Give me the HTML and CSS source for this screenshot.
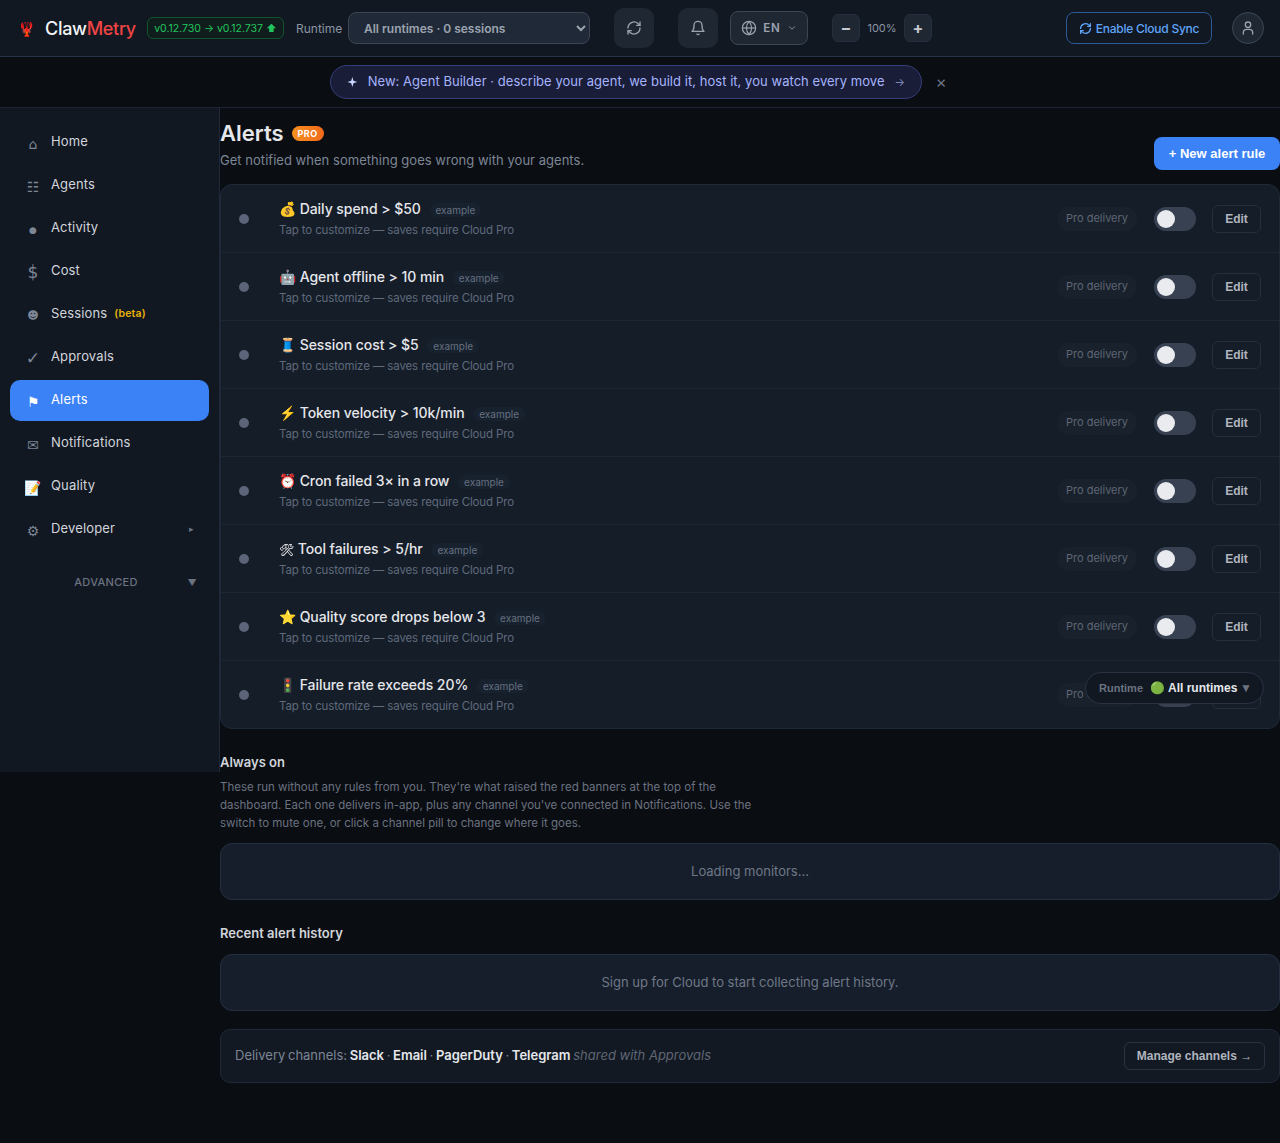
FILE: index.html
```html
<!DOCTYPE html>
<html lang="en">
<head>
    <meta charset="UTF-8">
    <meta name="viewport" content="width=device-width, initial-scale=1.0">
    <title>ClawMetry - Alerts</title>
    <link rel="stylesheet" href="styles.css">
</head>
<body>

    <header class="topbar">
        <div class="logo"><span class="logo-icon">🦞</span><span class="logo-text">Claw<em>Metry</em></span></div>
        <span class="version-pill">v0.12.730 → v0.12.737 ⬆</span>
        <span class="runtime-label">Runtime</span>
        <select class="runtime-select">
            <option>All runtimes · 0 sessions</option>
        </select>
        <button class="icon-btn refresh-btn" aria-label="Refresh">
            <svg width="16" height="16" viewBox="0 0 24 24" fill="none" stroke="currentColor" stroke-width="2" stroke-linecap="round" stroke-linejoin="round"><path d="M3 12a9 9 0 0 1 15-6.7L21 8"/><path d="M21 3v5h-5"/><path d="M21 12a9 9 0 0 1-15 6.7L3 16"/><path d="M8 16H3v5"/></svg>
        </button>
        <button class="icon-btn bell-btn" aria-label="Notifications">
            <svg width="16" height="16" viewBox="0 0 24 24" fill="none" stroke="currentColor" stroke-width="2" stroke-linecap="round" stroke-linejoin="round"><path d="M6 8a6 6 0 0 1 12 0c0 7 3 9 3 9H3s3-2 3-9"/><path d="M10.3 21a2 2 0 0 0 3.4 0"/></svg>
        </button>
        <button class="lang-btn">
            <svg width="16" height="16" viewBox="0 0 24 24" fill="none" stroke="currentColor" stroke-width="1.8"><circle cx="12" cy="12" r="10"/><path d="M2 12h20"/><path d="M12 2a15 15 0 0 1 0 20a15 15 0 0 1 0-20"/></svg>
            <span>EN</span>
            <svg width="10" height="10" viewBox="0 0 24 24" fill="none" stroke="currentColor" stroke-width="2" stroke-linecap="round" stroke-linejoin="round"><path d="M6 9l6 6 6-6"/></svg>
        </button>
        <div class="zoom-group">
            <button class="zoom-btn">−</button>
            <span class="zoom-value">100%</span>
            <button class="zoom-btn">+</button>
        </div>
        <button class="sync-btn">
            <svg width="13" height="13" viewBox="0 0 24 24" fill="none" stroke="currentColor" stroke-width="2.4" stroke-linecap="round" stroke-linejoin="round"><path d="M3 12a9 9 0 0 1 15-6.7L21 8"/><path d="M21 3v5h-5"/><path d="M21 12a9 9 0 0 1-15 6.7L3 16"/><path d="M8 16H3v5"/></svg>
            Enable Cloud Sync
        </button>
        <button class="avatar-btn" aria-label="Account">
            <svg width="16" height="16" viewBox="0 0 24 24" fill="none" stroke="currentColor" stroke-width="2" stroke-linecap="round" stroke-linejoin="round"><circle cx="12" cy="7" r="4"/><path d="M5 21v-2a5 5 0 0 1 5-5h4a5 5 0 0 1 5 5v2"/></svg>
        </button>
    </header>

    <div class="banner">
        <a class="banner-pill" href="#">
            <svg width="12" height="12" viewBox="0 0 24 24" fill="#c7d2fe"><path d="M12 1l2.6 8.4L23 12l-8.4 2.6L12 23l-2.6-8.4L1 12l8.4-2.6z"/></svg>
            <span class="banner-text">New: Agent Builder · describe your agent, we build it, host it, you watch every move</span>
            <span class="banner-arrow">→</span>
        </a>
        <button class="banner-close" aria-label="Dismiss">×</button>
    </div>

    <div class="layout">
        <nav class="sidebar">
            <a class="nav-item" href="#"><span class="nav-icon">⌂</span>Home</a>
            <a class="nav-item" href="#"><span class="nav-icon">☷</span>Agents</a>
            <a class="nav-item" href="#"><span class="nav-icon icon-small">●</span>Activity</a>
            <a class="nav-item" href="#"><span class="nav-icon icon-large">$</span>Cost</a>
            <a class="nav-item" href="#"><span class="nav-icon icon-face">☻</span>Sessions <span class="beta">(beta)</span></a>
            <a class="nav-item" href="#"><span class="nav-icon icon-large">✓</span>Approvals</a>
            <a class="nav-item active" href="#"><span class="nav-icon">⚑</span>Alerts</a>
            <a class="nav-item" href="#"><span class="nav-icon">✉</span>Notifications</a>
            <a class="nav-item" href="#"><span class="nav-icon">📝</span>Quality</a>
            <a class="nav-item" href="#"><span class="nav-icon">⚙</span>Developer<span class="nav-caret">▸</span></a>
            <div class="nav-advanced"><span>ADVANCED</span><span class="advanced-caret">▼</span></div>
        </nav>

        <main class="content">
            <div class="page-head">
                <div>
                    <h1>Alerts <span class="pro-badge">PRO</span></h1>
                    <p class="subtitle">Get notified when something goes wrong with your agents.</p>
                </div>
                <button class="new-rule-btn">+ New alert rule</button>
            </div>

            <div class="rules-card">
                <div class="rule-row">
                    <span class="rule-dot"></span>
                    <div class="rule-text">
                        <div class="rule-title">💰 Daily spend &gt; $50 <span class="example">example</span></div>
                        <div class="rule-sub">Tap to customize — saves require Cloud Pro</div>
                    </div>
                    <span class="delivery">Pro delivery</span>
                    <span class="toggle"><span class="knob"></span></span>
                    <button class="edit-btn">Edit</button>
                </div>
                <div class="rule-row">
                    <span class="rule-dot"></span>
                    <div class="rule-text">
                        <div class="rule-title">🤖 Agent offline &gt; 10 min <span class="example">example</span></div>
                        <div class="rule-sub">Tap to customize — saves require Cloud Pro</div>
                    </div>
                    <span class="delivery">Pro delivery</span>
                    <span class="toggle"><span class="knob"></span></span>
                    <button class="edit-btn">Edit</button>
                </div>
                <div class="rule-row">
                    <span class="rule-dot"></span>
                    <div class="rule-text">
                        <div class="rule-title">🧵 Session cost &gt; $5 <span class="example">example</span></div>
                        <div class="rule-sub">Tap to customize — saves require Cloud Pro</div>
                    </div>
                    <span class="delivery">Pro delivery</span>
                    <span class="toggle"><span class="knob"></span></span>
                    <button class="edit-btn">Edit</button>
                </div>
                <div class="rule-row">
                    <span class="rule-dot"></span>
                    <div class="rule-text">
                        <div class="rule-title">⚡ Token velocity &gt; 10k/min <span class="example">example</span></div>
                        <div class="rule-sub">Tap to customize — saves require Cloud Pro</div>
                    </div>
                    <span class="delivery">Pro delivery</span>
                    <span class="toggle"><span class="knob"></span></span>
                    <button class="edit-btn">Edit</button>
                </div>
                <div class="rule-row">
                    <span class="rule-dot"></span>
                    <div class="rule-text">
                        <div class="rule-title">⏰ Cron failed 3× in a row <span class="example">example</span></div>
                        <div class="rule-sub">Tap to customize — saves require Cloud Pro</div>
                    </div>
                    <span class="delivery">Pro delivery</span>
                    <span class="toggle"><span class="knob"></span></span>
                    <button class="edit-btn">Edit</button>
                </div>
                <div class="rule-row">
                    <span class="rule-dot"></span>
                    <div class="rule-text">
                        <div class="rule-title"><span class="tool-glyph">🛠</span> Tool failures &gt; 5/hr <span class="example">example</span></div>
                        <div class="rule-sub">Tap to customize — saves require Cloud Pro</div>
                    </div>
                    <span class="delivery">Pro delivery</span>
                    <span class="toggle"><span class="knob"></span></span>
                    <button class="edit-btn">Edit</button>
                </div>
                <div class="rule-row">
                    <span class="rule-dot"></span>
                    <div class="rule-text">
                        <div class="rule-title">⭐ Quality score drops below 3 <span class="example">example</span></div>
                        <div class="rule-sub">Tap to customize — saves require Cloud Pro</div>
                    </div>
                    <span class="delivery">Pro delivery</span>
                    <span class="toggle"><span class="knob"></span></span>
                    <button class="edit-btn">Edit</button>
                </div>
                <div class="rule-row">
                    <span class="rule-dot"></span>
                    <div class="rule-text">
                        <div class="rule-title">🚦 Failure rate exceeds 20% <span class="example">example</span></div>
                        <div class="rule-sub">Tap to customize — saves require Cloud Pro</div>
                    </div>
                    <span class="delivery">Pro delivery</span>
                    <span class="toggle"><span class="knob"></span></span>
                    <button class="edit-btn">Edit</button>
                </div>
            </div>

            <h3 class="section-title always-title">Always on</h3>
            <p class="section-desc">These run without any rules from you. They're what raised the red banners at the top of the dashboard. Each one delivers in-app, plus any channel you've connected in Notifications. Use the switch to mute one, or click a channel pill to change where it goes.</p>
            <div class="empty-card">Loading monitors...</div>

            <h3 class="section-title history-title">Recent alert history</h3>
            <div class="empty-card">Sign up for Cloud to start collecting alert history.</div>

            <div class="channels-card">
                <div class="channels-text">Delivery channels: <strong>Slack</strong> · <strong>Email</strong> · <strong>PagerDuty</strong> · <strong>Telegram</strong> <em>shared with Approvals</em></div>
                <button class="manage-btn">Manage channels →</button>
            </div>
        </main>
    </div>

    <div class="runtime-float">
        <span class="float-label">Runtime</span>
        <span class="float-dot">🟢</span>
        <span class="float-value">All runtimes</span>
        <span class="float-caret">▼</span>
    </div>

</body>
</html>
```

FILE: styles.css
```css
* {
    box-sizing: border-box;
}
body {
    margin: 0;
    min-height: 1143px;
    background-color: #0a0d12;
    color: #e5e7eb;
    font-family: Inter, "Noto Sans", sans-serif;
    font-size: 13px;
}
button {
    font-family: inherit;
    cursor: pointer;
}

/* top bar */
.topbar {
    height: 57px;
    display: flex;
    align-items: center;
    padding: 0 16px 0 20px;
    background-color: #111822;
    border-bottom: 1px solid #27324a;
}
.logo {
    display: flex;
    align-items: center;
    width: 127px;
}
.logo-icon {
    font-size: 14px;
    width: 27px;
    margin-left: -2px;
}
.logo-text {
    font-size: 18px;
    font-weight: 500;
    letter-spacing: -0.3px;
    color: #f3f4f6;
}
.logo-text em {
    font-style: normal;
    color: #ef4444;
}
.version-pill {
    width: 137px;
    height: 22px;
    display: flex;
    align-items: center;
    justify-content: center;
    border: 1px solid #14532d;
    border-radius: 6px;
    background-color: #0f1e1c;
    color: #22c55e;
    font-size: 10.5px;
    white-space: nowrap;
}
.runtime-label {
    margin-left: 12px;
    width: 52px;
    color: #8b94a3;
    font-size: 12px;
}
.runtime-select {
    width: 242px;
    height: 32px;
    padding: 0 11px;
    border: 1px solid #3b4554;
    border-radius: 8px;
    background-color: #1f2937;
    color: #9ca3af;
    font-family: inherit;
    font-size: 12px;
    font-weight: 600;
}
.icon-btn {
    width: 40px;
    height: 40px;
    display: flex;
    align-items: center;
    justify-content: center;
    border: none;
    border-radius: 10px;
    background-color: #1f2733;
    color: #9ca3af;
}
.refresh-btn {
    margin-left: 24px;
}
.bell-btn {
    margin-left: 24px;
}
.lang-btn {
    margin-left: 12px;
    width: 78px;
    height: 34px;
    display: flex;
    align-items: center;
    justify-content: center;
    gap: 6px;
    border: 1px solid #3b4554;
    border-radius: 8px;
    background-color: #1f2733;
    color: #9ca3af;
    font-size: 11.5px;
    font-weight: 600;
    letter-spacing: 1px;
}
.zoom-group {
    margin-left: 24px;
    display: flex;
    align-items: center;
}
.zoom-btn {
    width: 28px;
    height: 28px;
    padding: 0;
    border: 1px solid #252e3c;
    border-radius: 6px;
    background-color: #1f2733;
    color: #c4c9d2;
    font-size: 16px;
    font-weight: 700;
    line-height: 1;
}
.zoom-value {
    width: 44px;
    text-align: center;
    color: #8b94a3;
    font-size: 11px;
}
.sync-btn {
    margin-left: auto;
    width: 146px;
    height: 32px;
    display: flex;
    align-items: center;
    justify-content: center;
    gap: 4px;
    border: 1px solid #2c5a94;
    border-radius: 8px;
    background-color: #111822;
    color: #60a5fa;
    font-size: 12px;
    font-weight: 500;
    letter-spacing: -0.25px;
    white-space: nowrap;
}
.avatar-btn {
    margin-left: 20px;
    width: 32px;
    height: 32px;
    display: flex;
    align-items: center;
    justify-content: center;
    border: 1px solid #3b4554;
    border-radius: 50%;
    background-color: #1f2733;
    color: #9ca3af;
}

/* announcement banner */
.banner {
    height: 51px;
    display: flex;
    align-items: center;
    justify-content: center;
    gap: 13px;
    padding-right: 3px;
    border-bottom: 1px solid #1b2230;
}
.banner-pill {
    width: 592px;
    height: 34px;
    display: flex;
    align-items: center;
    padding: 0 16px;
    gap: 10px;
    border: 1px solid #343f7a;
    border-radius: 17px;
    background-color: #1a1d38;
    color: #a5b4fc;
    font-size: 13px;
    text-decoration: none;
    white-space: nowrap;
}
.banner-text {
    letter-spacing: 0.04px;
    padding-bottom: 2px;
}
.banner-arrow {
    margin-left: auto;
    color: #7d88b8;
    font-size: 11px;
}
.banner-close {
    width: 12px;
    padding: 0;
    border: none;
    background: none;
    color: #6b7280;
    font-size: 17px;
    line-height: 1;
}

/* sidebar + main */
.layout {
    display: flex;
    align-items: flex-start;
}
.sidebar {
    width: 220px;
    height: 664px;
    flex-shrink: 0;
    padding: 14px 10px 0;
    background-color: #111822;
    border-right: 1px solid #1f2937;
}
.nav-item {
    height: 41px;
    width: 199px;
    margin-bottom: 2px;
    display: flex;
    align-items: center;
    padding: 0 0 3px 13px;
    border-radius: 10px;
    color: #d1d5db;
    font-size: 13px;
    font-weight: 400;
    letter-spacing: 0.15px;
    text-decoration: none;
}
.nav-icon {
    width: 20px;
    margin-right: 8px;
    color: #7d8695;
    font-family: "DejaVu Sans", sans-serif;
    font-size: 14px;
    text-align: center;
    flex-shrink: 0;
    padding-top: 5px;
}
.icon-small {
    font-size: 9px;
}
.icon-large {
    font-size: 17px;
    padding-top: 3px;
}
.icon-face {
    font-size: 11px;
}
.nav-item.active {
    background-color: #3b82f6;
    color: #ffffff;
}
.nav-item.active .nav-icon {
    color: #ffffff;
}
.beta {
    margin-left: 7px;
    color: #eab308;
    font-size: 10.5px;
    font-weight: 600;
}
.nav-caret {
    margin-left: auto;
    margin-right: 15px;
    color: #6b7280;
    font-size: 9px;
}
.nav-advanced {
    position: relative;
    margin-top: 25px;
    padding-right: 7px;
    text-align: center;
    color: #6b7280;
    font-size: 11px;
    font-weight: 500;
    letter-spacing: 0.3px;
}
.advanced-caret {
    position: absolute;
    right: 12px;
    top: 2px;
    font-size: 9px;
}
.content {
    flex: 1;
    min-width: 0;
}
.page-head {
    height: 76px;
    display: flex;
    justify-content: space-between;
    align-items: flex-end;
    padding-bottom: 15px;
}
h1 {
    margin: 0;
    display: flex;
    align-items: center;
    gap: 8px;
    color: #e5e7eb;
    font-size: 22px;
    font-weight: 600;
    line-height: 28px;
}
.pro-badge {
    width: 32px;
    height: 15px;
    margin-top: 1px;
    display: flex;
    align-items: center;
    justify-content: center;
    border-radius: 8px;
    background: linear-gradient(90deg, #f59020, #f26a1c);
    color: #ffffff;
    font-size: 9px;
    font-weight: 700;
    letter-spacing: 0.5px;
}
.subtitle {
    margin: 4px 0 0;
    color: #7d8695;
    font-size: 13px;
    letter-spacing: 0.03px;
    line-height: 18px;
}
.new-rule-btn {
    width: 126px;
    height: 33px;
    margin-bottom: -1px;
    padding: 0;
    border: none;
    border-radius: 8px;
    background-color: #3b82f6;
    color: #ffffff;
    font-family: "Liberation Sans", Arial, sans-serif;
    font-size: 13px;
    font-weight: 700;
}
.rules-card {
    border: 1px solid #1f2a38;
    border-radius: 12px;
    background-color: #151d29;
    overflow: hidden;
}
.rule-row {
    height: 68px;
    display: flex;
    align-items: center;
    padding: 0 18px;
    border-bottom: 1px solid #1c2634;
}
.rule-row:last-child {
    height: 67px;
    border-bottom: none;
}
.rule-dot {
    width: 10px;
    height: 10px;
    margin-right: 30px;
    border-radius: 50%;
    background-color: #5b6479;
}
.rule-text {
    flex: 1;
}
.rule-title {
    color: #e5e7eb;
    font-size: 14px;
    font-weight: 500;
    letter-spacing: -0.05px;
    line-height: 20px;
}
.tool-glyph {
    font-size: 12px;
    filter: grayscale(1) brightness(1.6);
}
.example {
    margin-left: 5px;
    padding: 1px 6px;
    border-radius: 8px;
    background-color: #18222f;
    color: #667080;
    font-size: 10px;
    font-weight: 400;
    letter-spacing: 0;
}
.rule-sub {
    margin-top: 1px;
    color: #5f6a7b;
    font-size: 11.5px;
    letter-spacing: -0.13px;
    line-height: 18px;
}
.delivery {
    width: 80px;
    height: 24px;
    display: flex;
    align-items: center;
    justify-content: center;
    padding-bottom: 1px;
    border-radius: 12px;
    background-color: #19212d;
    color: #5f6674;
    font-size: 11px;
}
.toggle {
    width: 42px;
    height: 24px;
    margin-left: 17px;
    padding: 3px;
    border-radius: 12px;
    background-color: #374151;
}
.knob {
    display: block;
    width: 18px;
    height: 18px;
    border-radius: 50%;
    background-color: #e9ebee;
}
.edit-btn {
    width: 49px;
    height: 28px;
    margin-left: 16px;
    padding: 0;
    border: 1px solid #252f3e;
    border-radius: 6px;
    background-color: #151d29;
    color: #b0b5be;
    font-family: "Liberation Sans", Arial, sans-serif;
    font-size: 12px;
    font-weight: 700;
}
.section-title {
    margin: 0;
    color: #d1d5db;
    font-size: 13px;
    font-weight: 600;
    line-height: 18px;
}
.always-title {
    margin-top: 24px;
}
.history-title {
    margin-top: 24px;
    margin-bottom: 12px;
}
.section-desc {
    max-width: 540px;
    margin: 7px 0 11px;
    color: #6b7280;
    font-size: 11.5px;
    line-height: 18px;
}
.empty-card {
    height: 57px;
    display: flex;
    align-items: center;
    justify-content: center;
    padding-bottom: 2px;
    border: 1px solid #243042;
    border-radius: 12px;
    background-color: #161e2b;
    color: #6f7887;
    font-size: 13px;
}
.channels-card {
    height: 54px;
    margin-top: 18px;
    display: flex;
    align-items: center;
    justify-content: space-between;
    padding: 0 14px;
    border: 1px solid #1f2937;
    border-radius: 10px;
    background-color: #121923;
    color: #7d8695;
    font-size: 13px;
}
.channels-text {
    padding-bottom: 2px;
    word-spacing: -1px;
}
.channels-card strong {
    color: #e5e7eb;
    font-weight: 600;
}
.channels-card em {
    color: #5f6674;
    word-spacing: 0;
}
.manage-btn {
    width: 141px;
    height: 28px;
    padding: 0;
    border: 1px solid #2a3342;
    border-radius: 6px;
    background-color: #121923;
    color: #b0b5be;
    font-family: "Liberation Sans", Arial, sans-serif;
    font-size: 12px;
    font-weight: 700;
}

/* floating runtime chip */
.runtime-float {
    position: fixed;
    left: 1085px;
    top: 672px;
    width: 179px;
    height: 32px;
    display: flex;
    align-items: center;
    padding: 0 11px 0 13px;
    border: 1px solid #2a3342;
    border-radius: 16px;
    background-color: #111822;
    font-family: "Liberation Sans", Arial, sans-serif;
    font-size: 12px;
}
.float-label {
    color: #6b7280;
    font-size: 11px;
    font-weight: 700;
}
.float-dot {
    margin-left: 7px;
    font-size: 12px;
}
.float-value {
    margin-left: 3px;
    color: #e5e7eb;
    font-weight: 700;
}
.float-caret {
    margin-left: auto;
    color: #6b7280;
    font-size: 12px;
}
```
